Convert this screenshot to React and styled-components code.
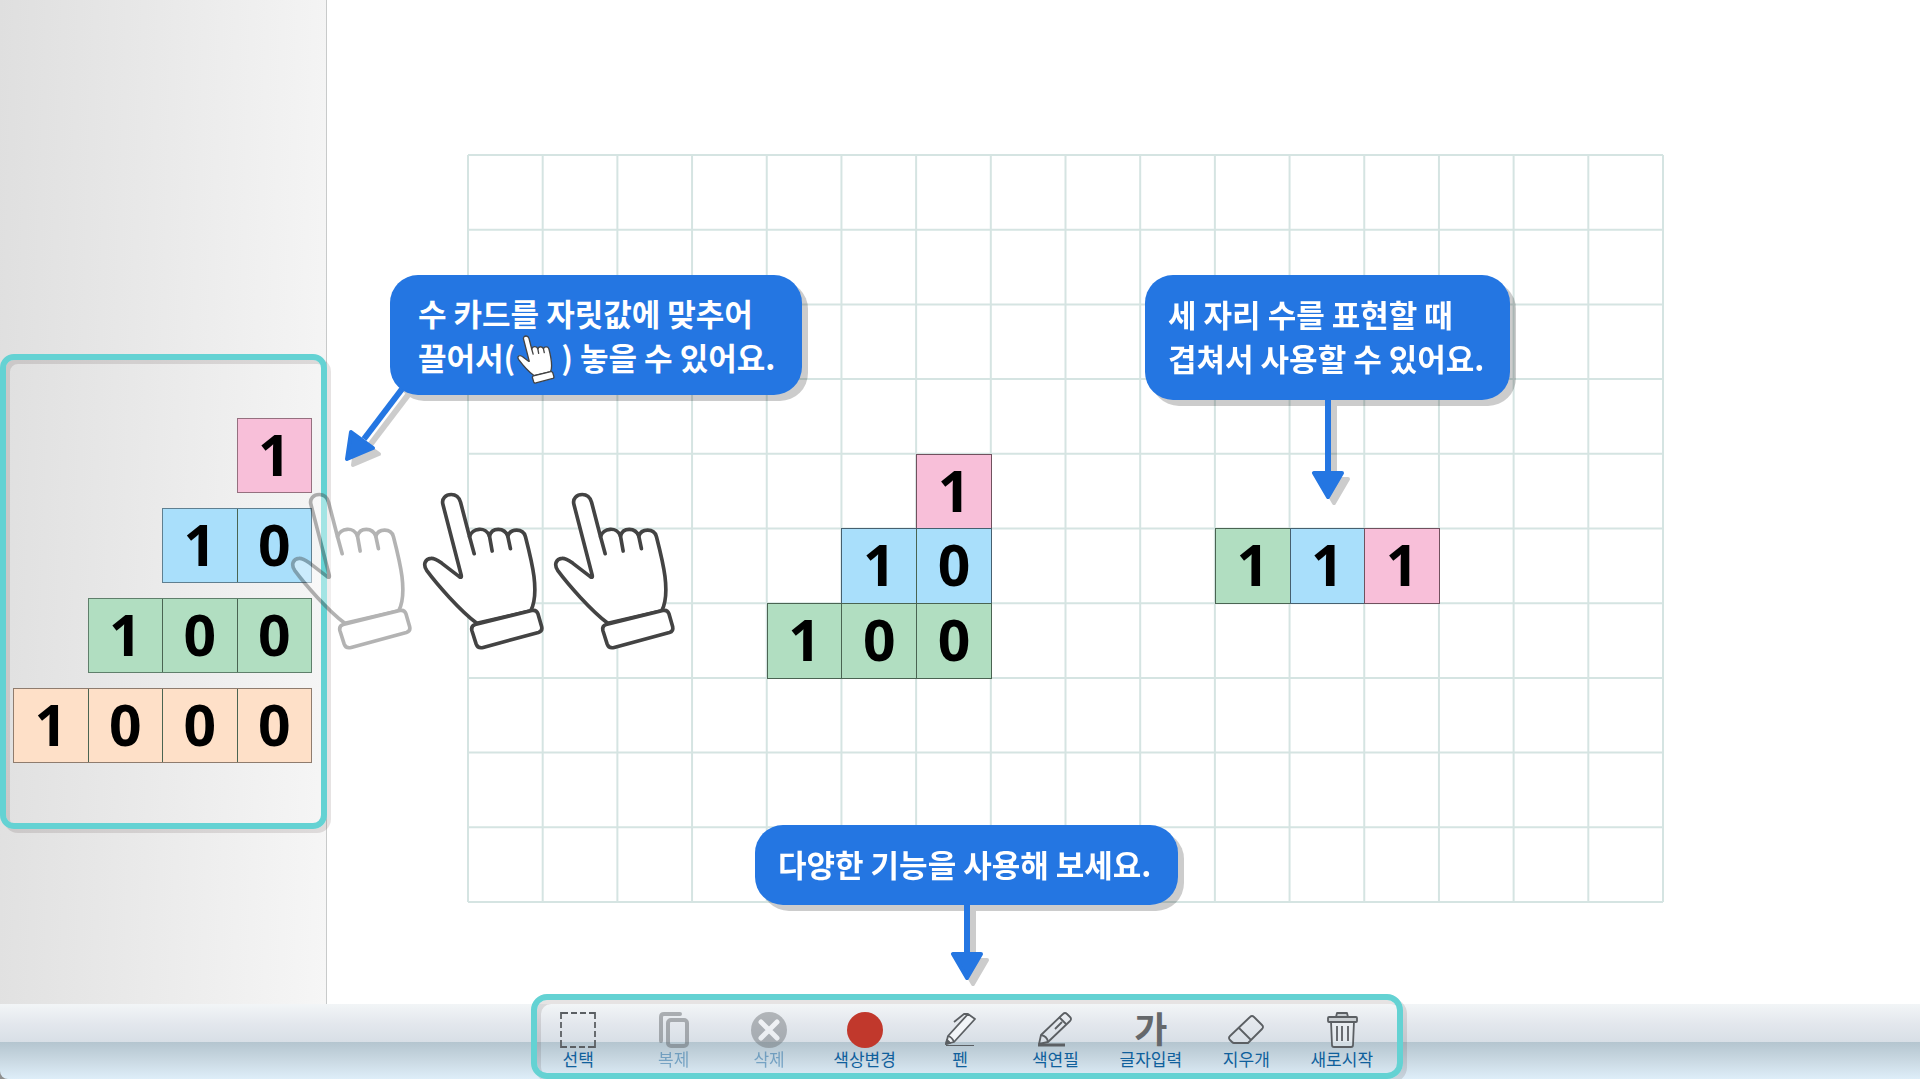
import React from "react";
import styled, { createGlobalStyle, css } from "styled-components";

const GlobalStyle = createGlobalStyle`
  * { box-sizing: border-box; }
  body {
    margin: 0;
    background: #fff;
    font-family: "Noto Sans CJK KR", "Noto Sans", sans-serif;
  }
  button {
    margin: 0;
    padding: 0;
    border: 0;
    background: none;
    font: inherit;
    color: inherit;
    cursor: pointer;
  }
  svg { display: block; }
`;

const TEAL = "#64d2d3";
const BLUE = "#2476e2";

const Page = styled.div`
  display: flex;
  flex-direction: column;
  min-height: 100vh;
  overflow: hidden;
`;

const Workspace = styled.main`
  position: relative;
  flex: 1;
  display: flex;
`;

const Sidebar = styled.aside`
  flex: none;
  width: 327px;
  padding-top: 354px;
  border-right: 1px solid #c8caca;
  background: linear-gradient(92deg, #dfdfdf 0%, #e8e8e8 40%, #f6f6f6 100%);
`;

const frame = css`
  border: 6px solid ${TEAL};
  border-radius: 14px;
  box-shadow: 4px 4px 0 rgba(60, 40, 40, 0.13), inset 4px 4px 0 rgba(60, 40, 40, 0.13);
`;

const Palette = styled.section`
  ${frame}
  position: relative;
  width: 327px;
  padding: 58px 10px 60px 7px;
  display: flex;
  flex-direction: column;
  gap: 15px;
`;

const PaletteRow = styled.div`
  display: grid;
  grid-template-columns: repeat(4, 1fr);
  grid-auto-rows: 75px;
`;

const cardColors = {
  1: { fill: "#f8bfd9", line: "#95707f", placedLine: "#70515e" },
  10: { fill: "#a9dffb", line: "#5f7f90", placedLine: "#46606f" },
  100: { fill: "#b1dec1", line: "#5f7f6b", placedLine: "#4a6452" },
  1000: { fill: "#fee0c8", line: "#8f7c6e", placedLine: "#6e5f54" },
};

const lineColor = (p) => cardColors[p.$kind][p.$placed ? "placedLine" : "line"];

const Card = styled.button`
  position: relative;
  grid-column: ${(p) => p.$column} / span ${(p) => p.$digits};
  grid-row: ${(p) => p.$row || 1};
  display: flex;
  margin-right: -1px;
  margin-bottom: ${(p) => (p.$placed ? "-1px" : "0")};
  border: 1px solid ${lineColor};
  background: ${(p) => cardColors[p.$kind].fill};
  color: #000;
`;

const Slot = styled.span`
  flex: 1;
  display: flex;
  align-self: stretch;
  & + & {
    border-left: 1px solid ${lineColor};
  }
`;

const Digit = styled.span`
  flex: 1;
  align-self: center;
  padding-bottom: 4px;
  font: 700 57px/68px "Noto Sans", "Open Sans", sans-serif;
  text-align: center;
`;

const Canvas = styled.section`
  flex: 1;
  padding: 155px 257px 102px 141px;
`;

const Board = styled.div`
  position: relative;
  display: grid;
  grid-template-columns: repeat(16, 1fr);
  grid-template-rows: repeat(10, 1fr);
  height: 100%;
`;

const BoardLines = styled.svg`
  position: absolute;
  inset: 0;
  width: 100%;
  height: 100%;
  overflow: visible;
  stroke: #d5e4e2;
  stroke-width: 2;
`;

const CalloutBox = styled.div`
  position: absolute;
  left: ${(p) => p.$x}px;
  top: ${(p) => p.$y}px;
  width: ${(p) => p.$w}px;
  display: flex;
  flex-direction: column;
  align-items: center;
  filter: drop-shadow(6px 6px 0 rgba(0, 0, 0, 0.2));
`;

const CalloutText = styled.p`
  width: 100%;
  margin: 0;
  padding: ${(p) => p.$pad};
  border-radius: 28px;
  background: ${BLUE};
  color: #fff;
  font-size: 31px;
  font-weight: 700;
  line-height: 44px;
  white-space: nowrap;
`;

const DiagonalArrow = styled.svg`
  position: absolute;
  left: -48px;
  top: 108px;
`;

const InlineHand = styled.span`
  display: inline-block;
  height: 44px;
  margin: 0 6px 0 2px;
  vertical-align: top;
`;

const DragHand = styled.div`
  position: absolute;
  left: ${(p) => p.$x}px;
  top: 491px;
  opacity: ${(p) => (p.$faded ? 0.4 : 1)};
  pointer-events: none;
`;

const Bar = styled.footer`
  display: flex;
  justify-content: center;
  height: 75px;
  background: linear-gradient(#f2f5f7 0, #e3e7ed 20px, #d8dfe6 38px, #b4c5cf 38px, #c9d8e2 56px, #deeef9 75px);
  border-bottom-left-radius: 8px;
`;

const BarBacking = styled.div`
  position: relative;
  background: linear-gradient(90deg, #8f8f8f 20px, transparent 20px);
`;

const Toolbar = styled.nav`
  position: relative;
  display: grid;
  grid-template-columns: repeat(9, 1fr);
  width: 859px;
  &::after {
    ${frame}
    content: "";
    position: absolute;
    inset: -10px -13px 0 0;
    border-radius: 16px;
    pointer-events: none;
  }
`;

const Tool = styled.button`
  display: flex;
  flex-direction: column;
  align-items: center;
  padding-top: 8px;
  color: #0f609c;
  font-size: 17px;
  font-weight: 400;
  line-height: 22px;
  white-space: nowrap;
  &:disabled > * {
    opacity: 0.45;
  }
`;

const LetterIcon = styled.span`
  height: 36px;
  color: #65686b;
  font-size: 36px;
  font-weight: 700;
  line-height: 30px;
`;

function NumberCard({ kind, column, row, placed, digits }) {
  const text = digits || String(kind);
  return (
    <Card
      type="button"
      aria-label={text}
      $kind={kind}
      $column={column}
      $row={row}
      $digits={text.length}
      $placed={placed}
    >
      {text.split("").map((d, i) => (
        <Slot key={i} $kind={kind} $placed={placed}>
          <Digit>{d}</Digit>
        </Slot>
      ))}
    </Card>
  );
}

function Hand({ width, height, stroke }) {
  return (
    <svg
      width={width}
      height={height}
      viewBox="0 0 370 480"
      fill="#fff"
      stroke="#434343"
      strokeWidth={stroke}
      strokeLinecap="round"
      strokeLinejoin="round"
      aria-hidden="true"
    >
      <path d="M165 397C115 360 45 280 14 238C2 220 10 203 27 202C39 201 49 209 60 217L112 257Q120 262 118 253L63 40C58 22 72 10 88 10S112 20 116 33L143 137C150 110 193 105 203 135C210 108 248 108 258 135C266 112 303 110 311 136C330 210 355 305 327 360Z" />
      <path d="M143 137L157 188M203 135L211 180M258 135L266 173" fill="none" />
      <path d="M160 401L330 359Q344 355 349 369L360 408Q363 421 350 425L184 470Q168 474 163 460L150 419Q147 405 160 401Z" />
    </svg>
  );
}

function DownArrow({ stem }) {
  const h = stem + 29;
  return (
    <svg width="34" height={h} viewBox={`0 0 34 ${h}`} fill={BLUE} aria-hidden="true">
      <path d={`M14 0H20V${stem + 2}H14Z`} />
      <path
        d={`M3 ${stem + 2}H31L17 ${stem + 26}Z`}
        stroke={BLUE}
        strokeWidth="4"
        strokeLinejoin="round"
      />
    </svg>
  );
}

function Icon({ children, stroke = 2 }) {
  return (
    <svg
      width="36"
      height="36"
      viewBox="0 0 36 36"
      fill="none"
      stroke="#5b5f63"
      strokeWidth={stroke}
      strokeLinejoin="round"
      aria-hidden="true"
    >
      {children}
    </svg>
  );
}

const tools = [
  {
    label: "선택",
    icon: (
      <Icon stroke={1.8}>
        <path
          strokeLinejoin="miter"
          d="M1 7V1H8M11 1H17M20 1H26M29 1H35V7M35 10V16M35 19V25M35 28V35H28M25 35H19M16 35H10M7 35H1V28M1 25V19M1 16V10"
        />
      </Icon>
    ),
  },
  {
    label: "복제",
    disabled: true,
    icon: (
      <Icon stroke={4}>
        <path d="M5 29V5Q5 2 8 2H24" strokeLinecap="round" />
        <rect x="12" y="8" width="19" height="26" rx="3" />
      </Icon>
    ),
  },
  {
    label: "삭제",
    disabled: true,
    icon: (
      <Icon stroke={5}>
        <circle cx="18" cy="18" r="18" fill="#6b7074" stroke="none" />
        <path d="M10 10L26 26M26 10L10 26" stroke="#fff" strokeLinecap="round" />
      </Icon>
    ),
  },
  {
    label: "색상변경",
    icon: (
      <Icon>
        <circle cx="18" cy="18" r="18" fill="#c1382c" stroke="none" />
      </Icon>
    ),
  },
  {
    label: "펜",
    icon: (
      <Icon stroke={1.8}>
        <path d="M4 32L6 24L26 2L33 7L12 30Z" fill="#f2f5f8" />
        <path d="M6 24Q10 25 12 30M26 2L22 2L12 10" />
        <path d="M4 32L5 28L8 31Z" fill="#5b5f63" />
        <path d="M4 33.5H32" strokeWidth="1" />
      </Icon>
    ),
  },
  {
    label: "색연필",
    icon: (
      <Icon stroke={1.8}>
        <path d="M2 32L4 23L26 2Q28 0 30 2L33 5Q35 7 33 9L11 30Z" />
        <path d="M4 23Q10 24 11 30M22 5L29 12M18 17L25 10" />
        <path d="M1 33H28" strokeWidth="3" />
      </Icon>
    ),
  },
  { label: "글자입력", icon: <LetterIcon aria-hidden="true">가</LetterIcon> },
  {
    label: "지우개",
    icon: (
      <Icon stroke={1.8}>
        <path d="M2 24L22 5Q24 3 26 5L34 13Q36 15 34 17L20 31H6Q5 31 4 30L2 28Q0 26 2 24ZM11 16L23 28" />
      </Icon>
    ),
  },
  {
    label: "새로시작",
    icon: (
      <Icon stroke={1.8}>
        <path d="M12 5L13 1H23L24 5" fill="#c9ced2" />
        <path d="M7 9L8 33Q8 35 10 35H27Q29 35 29 33L30 9" fill="#eef1f4" fillOpacity="0.5" />
        <rect x="4" y="5" width="29" height="5" rx="1" fill="#c9ced2" />
        <path d="M13 14V29M18 14V29M24 14V29" />
      </Icon>
    ),
  },
];

const placedCards = [
  { kind: 1, column: 7, row: 5 },
  { kind: 10, column: 6, row: 6 },
  { kind: 100, column: 5, row: 7 },
  { kind: 100, digits: "1", column: 11, row: 6 },
  { kind: 10, digits: "1", column: 12, row: 6 },
  { kind: 1, column: 13, row: 6 },
];

export default function App() {
  return (
    <Page>
      <GlobalStyle />
      <Workspace>
        <Sidebar>
          <Palette aria-label="수 카드">
            {[1, 10, 100, 1000].map((kind) => (
              <PaletteRow key={kind}>
                <NumberCard kind={kind} column={5 - String(kind).length} />
              </PaletteRow>
            ))}
          </Palette>
        </Sidebar>
        <Canvas>
          <Board>
            <BoardLines aria-hidden="true">
              {Array.from({ length: 17 }, (_, i) => (
                <line key={`c${i}`} x1={`${i * 6.25}%`} x2={`${i * 6.25}%`} y1="0" y2="100%" />
              ))}
              {Array.from({ length: 11 }, (_, i) => (
                <line key={`r${i}`} y1={`${i * 10}%`} y2={`${i * 10}%`} x1="0" x2="100%" />
              ))}
            </BoardLines>
            {placedCards.map((card) => (
              <NumberCard key={`${card.column}-${card.row}`} placed {...card} />
            ))}
          </Board>
        </Canvas>

        <CalloutBox $x={390} $y={275} $w={412}>
          <CalloutText $pad="16px 28px">
            수 카드를 자릿값에 맞추어
            <br />
            끌어서(
            <InlineHand>
              <Hand width={38} height={49} stroke={13} />
            </InlineHand>
            ) 놓을 수 있어요.
          </CalloutText>
          <DiagonalArrow width="70" height="82" fill={BLUE} aria-hidden="true">
            <path d="M60 6L22 56" stroke={BLUE} strokeWidth="6" />
            <path d="M9 49L31 65L5 76Z" stroke={BLUE} strokeWidth="4" strokeLinejoin="round" />
          </DiagonalArrow>
        </CalloutBox>

        <CalloutBox $x={1145} $y={275} $w={365}>
          <CalloutText $pad="17px 23px 20px">
            세 자리 수를 표현할 때
            <br />
            겹쳐서 사용할 수 있어요.
          </CalloutText>
          <DownArrow stem={71} />
        </CalloutBox>

        <CalloutBox $x={755} $y={825} $w={423}>
          <CalloutText $pad="17px 23px 19px">다양한 기능을 사용해 보세요.</CalloutText>
          <DownArrow stem={47} />
        </CalloutBox>

        {[290, 422, 553].map((x, i) => (
          <DragHand key={x} $x={x} $faded={i === 0}>
            <Hand width={123} height={160} stroke={11} />
          </DragHand>
        ))}
      </Workspace>
      <BarBacking>
        <Bar>
          <Toolbar aria-label="도구">
            {tools.map((t) => (
              <Tool key={t.label} type="button" disabled={t.disabled}>
                {t.icon}
                <span>{t.label}</span>
              </Tool>
            ))}
          </Toolbar>
        </Bar>
      </BarBacking>
    </Page>
  );
}
